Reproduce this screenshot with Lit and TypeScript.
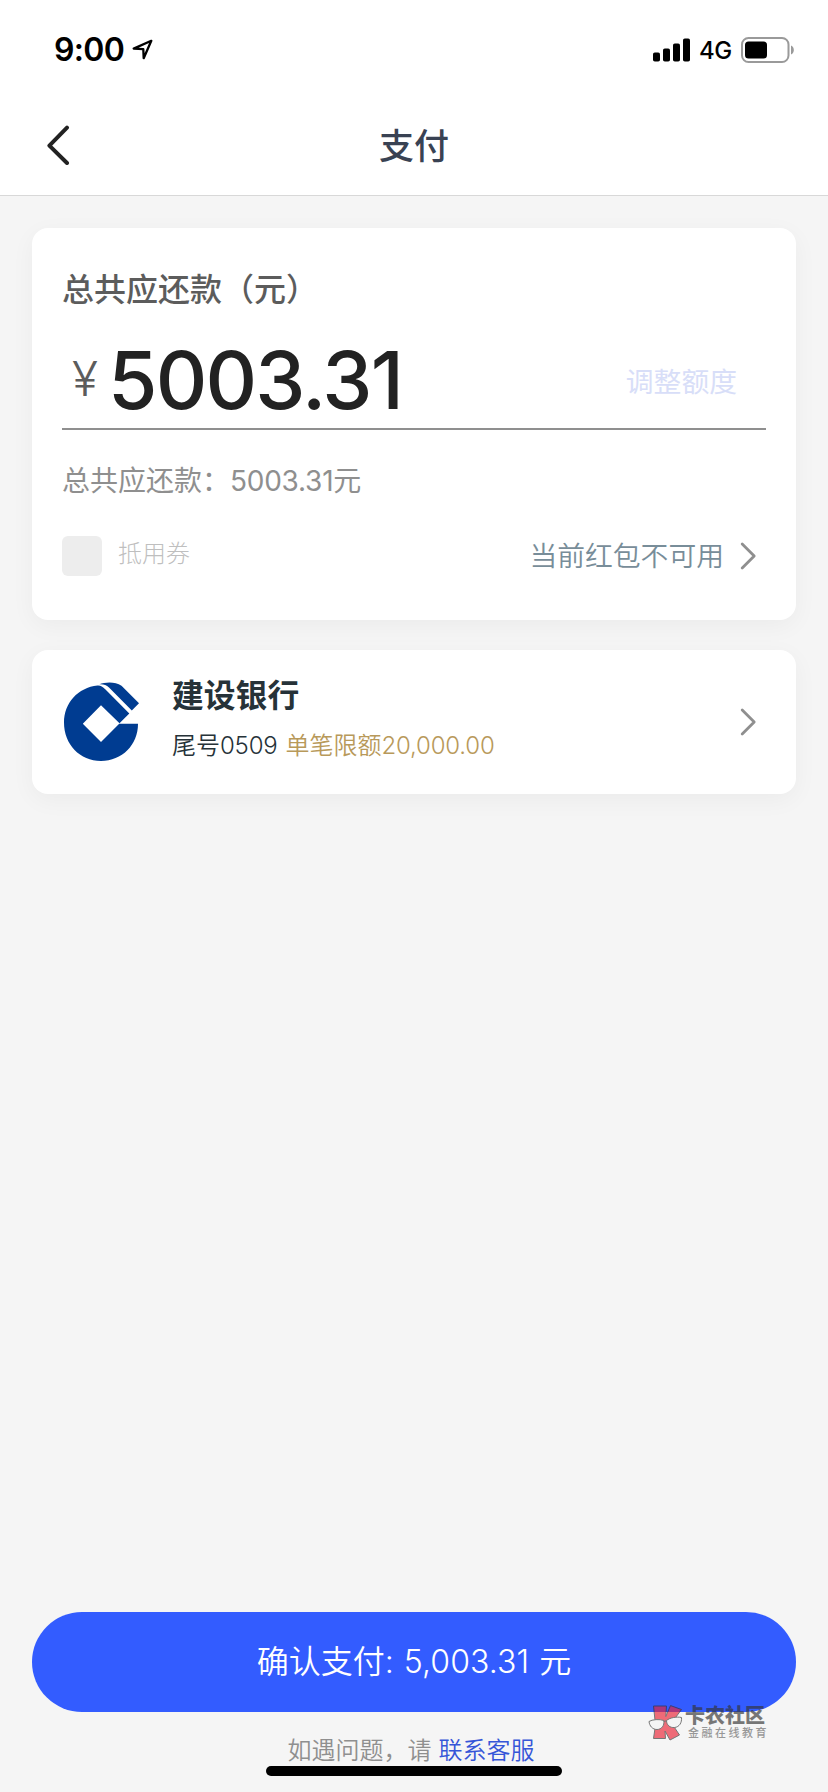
import { LitElement, html, css } from "lit";
import { customElement, property } from "lit/decorators.js";

@customElement("status-bar")
class StatusBar extends LitElement {
  static styles = css`
    :host {
      display: flex;
      align-items: center;
      height: 99px;
      padding: 0 33px 0 54px;
      color: #000;
    }
    .time {
      font-size: 32px;
      line-height: 40px;
      font-weight: 600;
      letter-spacing: -0.7px;
      width: 78px;
      padding-top: 1px;
    }
    .spacer { flex: 1; }
    .net {
      font-size: 24px;
      line-height: 32px;
      font-weight: 500;
      letter-spacing: -0.6px;
      width: 42px;
      margin-top: 2px;
    }
    .signal { margin-right: 8px; }
    svg { display: block; }
  `;
  render() {
    return html`
      <span class="time">9:00</span>
      <svg width="22" height="22" viewBox="0 0 22 22" fill="none" stroke="#000" stroke-width="2.3" stroke-linejoin="round">
        <path d="M19.300 1.800 1.700 9.600l9.600.6.4 9z" />
      </svg>
      <span class="spacer"></span>
      <svg class="signal" width="38" height="24" viewBox="0 0 38 24">
        <rect x="0" y="14.500" width="7" height="9" rx="1.8" />
        <rect x="10" y="10.500" width="7" height="13" rx="1.8" />
        <rect x="20" y="5.500" width="7" height="18" rx="1.8" />
        <rect x="30" y="0.500" width="7" height="23" rx="1.8" />
      </svg>
      <span class="net">4G</span>
      <svg width="54" height="26" viewBox="0 0 54 26">
        <rect x="1" y="1" width="46.500" height="24" rx="6.500" fill="none" stroke="#9a9a9a" stroke-width="2" />
        <rect x="4" y="4.500" width="22" height="17" rx="3.500" />
        <path d="M50 8.500c3.800 1.600 3.800 7.400 0 9z" fill="#9a9a9a" />
      </svg>
    `;
  }
}

@customElement("nav-header")
class NavHeader extends LitElement {
  @property() heading = "";
  static styles = css`
    :host {
      display: grid;
      grid-template-columns: 1fr auto 1fr;
      align-items: center;
      height: 92px;
      padding: 0 46px 4px;
      border-bottom: 1px solid #d8d8d8;
    }
    .title {
      font-size: 35px;
      line-height: 48px;
      font-weight: 500;
      color: #394253;
      padding-top: 1px;
    }
    svg { display: block; }
  `;
  render() {
    return html`
      <svg width="26" height="40" viewBox="0 0 26 40" fill="none" stroke="#222" stroke-width="4" stroke-linecap="round" stroke-linejoin="round">
        <path d="M21 2.600 3.400 20.600 21 38" />
      </svg>
      <span class="title">${this.heading}</span>
    `;
  }
}

@customElement("chevron-right")
class ChevronRight extends LitElement {
  static styles = css`
    :host, svg { display: block; }
  `;
  render() {
    return html`<svg width="17" height="28" viewBox="0 0 17 28" fill="none" stroke="#8f8f8f" stroke-width="2.8" stroke-linecap="round" stroke-linejoin="round">
      <path d="M2.200 2 14.200 14 2.200 26" />
    </svg>`;
  }
}

const cardStyles = css`
  :host {
    display: block;
    box-sizing: border-box;
    background: #fff;
    border-radius: 16px;
    box-shadow: 0 6px 24px rgba(0, 0, 0, 0.045);
  }
`;

@customElement("amount-card")
class AmountCard extends LitElement {
  static styles = [
    cardStyles,
    css`
      :host { height: 392px; padding: 38px 30px 0; }
      .label {
        font-size: 32px;
        line-height: 48px;
        font-weight: 500;
        color: #5c5c5c;
      }
      .amount {
        display: flex;
        align-items: center;
        height: 96px;
        padding: 18px 29px 0 10px;
        border-bottom: 2px solid #8f8f8f;
      }
      .yen {
        width: 36px;
        font-size: 48px;
        line-height: 60px;
        font-weight: 300;
        color: #5c5c5c;
        margin-bottom: 3px;
      }
      .value {
        flex: 1;
        font-size: 80px;
        line-height: 84px;
        font-weight: 500;
        letter-spacing: -1.8px;
        color: #222;
        margin-bottom: 1px;
      }
      .adjust {
        font-size: 27.8px;
        line-height: 40px;
        font-weight: 400;
        color: #d8def8;
        padding-top: 4px;
      }
      .total {
        margin-top: 31px;
        font-size: 28px;
        line-height: 40px;
        color: #8f8f8f;
      }
      .num { letter-spacing: -0.25px; }
      .coupon {
        display: flex;
        align-items: center;
        margin-top: 35px;
        height: 40px;
      }
      .box {
        width: 40px;
        height: 40px;
        border-radius: 6px;
        background: #ededed;
      }
      .name {
        flex: 1;
        margin-left: 16px;
        padding-bottom: 4px;
        font-size: 24px;
        line-height: 32px;
        font-weight: 300;
        color: #bfbfbf;
      }
      .state {
        font-size: 27.8px;
        line-height: 40px;
        font-weight: 350;
        color: #788d99;
        margin-right: 16px;
      }
      chevron-right { margin-right: 9px; }
    `,
  ];
  render() {
    return html`
      <div class="label">总共应还款（元）</div>
      <div class="amount">
        <span class="yen">¥</span>
        <span class="value">5003.31</span>
        <span class="adjust">调整额度</span>
      </div>
      <div class="total">总共应还款：<span class="num">5003.31</span>元</div>
      <div class="coupon">
        <span class="box"></span>
        <span class="name">抵用券</span>
        <span class="state">当前红包不可用</span>
        <chevron-right></chevron-right>
      </div>
    `;
  }
}

@customElement("bank-card")
class BankCard extends LitElement {
  static styles = [
    cardStyles,
    css`
      :host {
        display: flex;
        align-items: center;
        height: 144px;
        padding: 0 39px 0 32px;
      }
      .logo { display: block; margin-right: 32px; }
      .info { flex: 1; padding-bottom: 6px; }
      .bank {
        font-size: 31.8px;
        line-height: 44px;
        font-weight: 700;
        color: #263238;
      }
      .detail {
        display: flex;
        gap: 8px;
        margin-top: 10px;
        font-size: 24px;
        line-height: 36px;
        font-weight: 350;
        color: #263238;
      }
      .limit { color: #b8995a; }
      .num { letter-spacing: -0.2px; }
    `,
  ];
  render() {
    return html`
      <svg class="logo" width="76" height="80" viewBox="0 0 76 80">
        <path fill="#003c91" d="M33.500 3.500C14 5.500 0 21 0 40.500 0 62.500 16 79 37 79 58 79 74 63 74 41.800H55.200L37 60 18.800 41.800 37 23.300 55.500 41.300 65.300 31.500 41.500 7.500C38.500 4.300 36.500 3.300 33.500 3.500Z" />
        <path fill="#003c91" d="M35.300 2.300C41 .2 51 -.6 57.500 3.700L75 21.300 67.800 28.500 45 5.500C42.200 3 39.500 2 35.300 2.300Z" />
      </svg>
      <div class="info">
        <div class="bank">建设银行</div>
        <div class="detail">
          <span>尾号<span class="num">0509</span></span>
          <span class="limit">单笔限额<span class="num">20,000.00</span></span>
        </div>
      </div>
      <chevron-right></chevron-right>
    `;
  }
}

@customElement("community-mark")
class CommunityMark extends LitElement {
  static styles = css`
    :host {
      display: flex;
      gap: 2px;
      align-items: flex-start;
      opacity: 0.65;
    }
    .words { padding-top: 1px; }
    .name {
      font-size: 20px;
      line-height: 20px;
      font-weight: 900;
      color: #333;
      white-space: nowrap;
    }
    .sub {
      padding: 0 0 0 3px;
      font-size: 11px;
      line-height: 14px;
      font-weight: 500;
      letter-spacing: 2.500px;
      color: #666;
      white-space: nowrap;
    }
    svg { display: block; }
  `;
  render() {
    return html`
      <svg width="35" height="36" viewBox="0 0 35 36" stroke="#333" stroke-width="1" stroke-linejoin="round">
        <path fill="#eb2234" d="M5.500 1H18.500L17.800 11.500 22.500 .6 33.500 4.500 23.500 18 31.500 30 22 35 17 26 17.500 33.500H5.500L7.500 20Z" />
        <path fill="#f4f4f4" d="M1 16.500C4 14.300 12 14 15.800 15.500 16.700 20.500 13.500 24.500 9 24.500 4.500 24.500 1.500 21 1 16.500Z" />
        <path fill="#f4f4f4" d="M18.500 15.500C22 12.500 29 11.500 33.500 12.500 34 17.500 31.500 22 26.500 22.500 22 23 18.500 20 18.500 15.500Z" />
        <path fill="none" d="M15.800 16.500 18.500 15.800" />
      </svg>
      <div class="words">
        <div class="name">卡农社区</div>
        <div class="sub">金融在线教育</div>
      </div>
    `;
  }
}

@customElement("app-root")
class AppRoot extends LitElement {
  static styles = css`
    :host {
      display: flex;
      flex-direction: column;
      position: relative;
      box-sizing: border-box;
      height: 1792px;
      overflow: hidden;
      background: #f5f5f5;
      font-family: Inter, "Noto Sans CJK SC", sans-serif;
      font-weight: 400;
    }
    header { background: #fff; }
    main {
      flex: 1;
      display: flex;
      flex-direction: column;
      gap: 30px;
      padding: 32px 32px 0;
    }
    footer {
      display: flex;
      flex-direction: column;
      align-items: center;
      padding: 0 32px 16px;
    }
    .pay {
      align-self: stretch;
      height: 100px;
      padding: 0;
      border: 0;
      border-radius: 50px;
      background: #335cff;
      color: #fff;
      font: inherit;
      font-size: 32px;
      line-height: 44px;
      font-weight: 350;
      word-spacing: 1px;
    }
    .num { letter-spacing: 0.1px; }
    .help {
      display: flex;
      gap: 7px;
      margin: 23px 6px 0 0;
      font-size: 24px;
      line-height: 31px;
      font-weight: 350;
      color: #8f8f8f;
    }
    .link { color: #3556d8; }
    .home {
      width: 296px;
      height: 10px;
      border-radius: 5px;
      background: #000;
    }
    community-mark {
      position: absolute;
      left: 648px;
      top: 1705px;
    }
  `;
  render() {
    return html`
      <header>
        <status-bar></status-bar>
        <nav-header heading="支付"></nav-header>
      </header>
      <main>
        <amount-card></amount-card>
        <bank-card></bank-card>
      </main>
      <footer>
        <button class="pay">确认支付: <span class="num">5,003.31</span> 元</button>
        <div class="help"><span>如遇问题，请</span><span class="link">联系客服</span></div>
        <div class="home"></div>
      </footer>
      <community-mark></community-mark>
    `;
  }
}
